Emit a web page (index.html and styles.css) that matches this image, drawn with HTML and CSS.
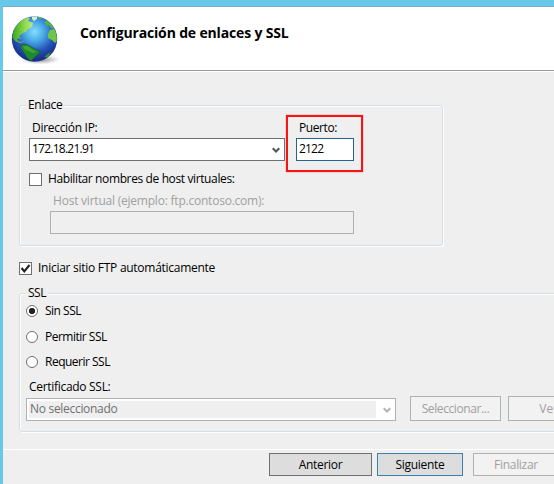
FILE: index.html
```html
<!DOCTYPE html>
<html lang="es">
<head>
<meta charset="utf-8">
<title>Configuración de enlaces y SSL</title>
<link rel="stylesheet" href="styles.css">
</head>
<body>
<div class="window">
  <header class="header">
    <svg class="globe" width="50" height="52" viewBox="0 0 50 52" aria-hidden="true">
      <defs>
        <radialGradient id="sea" cx="50%" cy="34%" r="62%">
          <stop offset="0" stop-color="#84e0f8"/>
          <stop offset=".35" stop-color="#48a8e6"/>
          <stop offset=".72" stop-color="#2450b6"/>
          <stop offset="1" stop-color="#192f8a"/>
        </radialGradient>
        <linearGradient id="land" x1="0" y1="0" x2="1" y2="0">
          <stop offset="0" stop-color="#35a51f"/>
          <stop offset=".6" stop-color="#8fd84a"/>
          <stop offset="1" stop-color="#c2e58a"/>
        </linearGradient>
        <radialGradient id="shade"><stop offset="0" stop-color="#555" stop-opacity=".75"/><stop offset="1" stop-color="#888" stop-opacity="0"/></radialGradient>
        <clipPath id="ball"><circle cx="23.5" cy="24" r="22.4"/></clipPath>
      </defs>
      <ellipse cx="29" cy="44.5" rx="20" ry="5" fill="url(#shade)"/>
      <circle cx="23.5" cy="24" r="22.7" fill="url(#sea)"/>
      <g clip-path="url(#ball)">
        <path fill="url(#land)" d="M1 22 3 13 9 6 16 2 19 3 17 6 22 8 21 12 17 14 15 17 12 18 8 21 10 24 7 23 6 25 9 27 14 26 9 28 4 26Z"/>
        <path fill="#d9eec4" d="M21 1 26 1 26 4 23 6 21 4Z"/>
        <path fill="#54b936" d="M27 2 31 2 30 4 28 4ZM34 6 38 6 42 11 43 14 40 13 38 10 36 11 34 8Z"/>
        <path fill="#70c548" d="M39 15 43 14 46 18 47 25 44 28 41 25 37 23 37 19Z"/>
        <path fill="#20892a" stroke="#123f66" stroke-width=".5" d="M10 30 14 29 19 31 22 33 29 36 28 39 25 41 22 44 20 46 16 43 13 38 10 34Z"/>
        <path fill="#58b936" d="M12 31 17 31 22 35 26 37 22 38 18 36 14 35Z" opacity=".6"/>
        <path fill="#2a9d30" d="M33 42 38 38 40 37 37 42Z"/>
      </g>
    </svg>
    <h1 class="title">Configuración de enlaces y SSL</h1>
  </header>

  <main class="content">
    <section class="group binding">
      <span class="legend l-enlace">Enlace</span>
      <div class="fields">
        <label class="field ip">
          <span class="text l-ip">Dirección IP:</span>
          <span class="box combo"><span class="v-ip">172.18.21.91</span>
            <svg class="chevron" width="8" height="7" viewBox="0 0 8 7"><path d="M.7 1.2 4 4.5 7.3 1.2"/></svg>
          </span>
        </label>
        <label class="field port">
          <span class="text l-port">Puerto:</span>
          <span class="box focused v-port">2122</span>
          <i class="marker"></i>
        </label>
      </div>
      <label class="check vhosts"><i class="tick"></i><span class="l-vhosts">Habilitar nombres de host virtuales:</span></label>
      <div class="vhost">
        <span class="text l-host">Host virtual (ejemplo: ftp.contoso.com):</span>
        <span class="box off"></span>
      </div>
    </section>

    <label class="check start"><i class="tick"><svg width="11" height="11" viewBox="0 0 11 11"><path d="M1.5 5 4.3 8.3 9.5 2" fill="none" stroke="#222" stroke-width="2.1"/></svg></i><span class="l-start">Iniciar sitio FTP automáticamente</span></label>

    <section class="group ssl">
      <span class="legend l-ssl">SSL</span>
      <div class="radios">
        <label class="radio"><i class="dot on"></i><span class="l-sin">Sin SSL</span></label>
        <label class="radio"><i class="dot"></i><span class="l-perm">Permitir SSL</span></label>
        <label class="radio"><i class="dot"></i><span class="l-req">Requerir SSL</span></label>
      </div>
      <span class="text l-cert">Certificado SSL:</span>
      <div class="cert">
        <span class="box combo off certbox"><span class="inner v-cert">No seleccionado</span>
          <svg class="chevron" width="8" height="7" viewBox="0 0 8 7"><path d="M.7 1.2 4 4.5 7.3 1.2"/></svg>
        </span>
        <button class="btn off sel" disabled><span class="b-sel">Seleccionar...</span></button>
        <button class="btn off ver" disabled><span>Ver...</span></button>
      </div>
    </section>
  </main>

  <footer class="footer">
    <button class="btn prev"><span class="b-prev">Anterior</span></button>
    <button class="btn next"><span class="b-next">Siguiente</span></button>
    <button class="btn off finish" disabled><span class="b-fin">Finalizar</span></button>
  </footer>
</div>
</body>
</html>
```

FILE: styles.css
```css
* { box-sizing: border-box; }
html, body { margin: 0; height: 484px; overflow: hidden; }
body { background: #66c9ea; color: #000; font: 12px/16px "Open Sans", "Noto Sans", sans-serif; }
i { font-style: normal; }
span { white-space: nowrap; }
.window { width: 100%; height: 484px; padding: 6px 0 0 3px; overflow: hidden; }
.header { display: flex; height: 66px; background: #fff; border-top: 1px solid #7caec9; border-bottom: 1px solid #fff; box-shadow: inset 0 -1px #999; padding: 8px 0 0 8px; }
.globe { flex: none; }
.title { margin: 8px 0 0 19px; font-size: 14px; line-height: 20px; font-weight: 700; letter-spacing: -.16px; white-space: nowrap; }

.content { height: 377px; background: #efefef; padding: 33px 0 0 16px; }
.group { border: 1px solid #d3dfe7; border-radius: 3px; box-shadow: 1px 1px #fff, inset 1px 1px #fff; }
.legend { display: block; width: max-content; background: #efefef; padding: 0 2px; margin: -9px 0 0 6px; height: 16px; }
.binding { width: 424px; height: 141px; }
.fields { display: flex; gap: 11px; margin: 7px 0 0 9px; }
.field { display: flex; flex-direction: column; position: relative; }
.text { display: block; height: 16px; }
.ip { width: 256px; }
.port { width: 58px; }
.ip .text, .port .text { height: 18px; padding-left: 3px; }
.box { display: block; height: 23px; border: 1px solid #707070; background: #fff; padding: 2px 0 0 2px; line-height: 16px; }
.combo { display: flex; justify-content: space-between; }
.chevron { flex: none; margin: 6px 4px 0 0; fill: none; stroke: #555; stroke-width: 2.2; }
.focused { border-color: #2a628f; }
.box.off { background: #efefef; border-color: #adb2b5; }
.marker { position: absolute; left: -10px; top: -5px; width: 77px; height: 57px; border: 2px solid #f81414; box-shadow: 0 0 1px #ff5050; }
.check { display: flex; align-items: center; height: 16px; gap: 6px; width: max-content; }
.tick { width: 13px; height: 13px; background: #fff; border: 1px solid #707070; display: block; }
.tick svg { display: block; }
.vhosts { margin: 10px 0 0 9px; }
.vhost { margin: 6px 0 0 30px; color: #a0a0a0; }
.vhost .text { padding-left: 3px; height: 18px; }
.vhost .box { width: 304px; }
.start { margin: 14px 0 17px; }

.ssl { width: 620px; height: 139px; }
.radios { display: grid; grid-template-rows: 26px 25px 25px; margin: 2px 0 0 6px; }
.radio { display: flex; height: 16px; align-items: center; gap: 7px; }
.dot { width: 12px; height: 12px; border: 1px solid #707070; border-radius: 50%; background: #fff; }
.dot.on { background: radial-gradient(circle, #222 2.8px, #fff 3.5px); }
.l-cert { margin-left: 9px; height: 17px; }
.cert { display: flex; align-items: flex-end; margin-left: 6px; }
.certbox { flex: none; width: 370px; margin-right: 14px; padding: 2px 0 0 2px; }
.cert .certbox { background: #fff; }
.inner { width: 347px; height: 17px; background: #efefef; color: #707070; padding-left: 1px; }
.certbox .chevron { stroke: #b5b5b5; }

.btn { font: inherit; color: #000; background: #ddd; border: 1px solid #707070; border-radius: 0; padding: 0; height: 23px; display: flex; align-items: center; justify-content: center; flex: none; }
.btn.off { color: #a0a0a0; background: #f2f2f2; border-color: #adb2b5; }
.cert .btn { width: 91px; height: 25px; }
.sel { margin-right: 7px; }
.footer { height: 35px; background: #efefef; border-top: 1px solid #fff; padding: 3px 0 0 266px; display: flex; }
.prev { width: 103px; margin-right: 5px; }
.btn.next { width: 86px; margin-right: 10px; border-color: #3c7fb1; }
.finish { width: 86px; }

.l-enlace, .l-ip, .l-cert, .v-cert, .b-prev, .b-next, .b-fin { letter-spacing: -.3px; }
.l-start { letter-spacing: -.27px; }
.l-host { letter-spacing: -.22px; }
.l-vhosts { letter-spacing: -.38px; }
.l-port, .b-sel { letter-spacing: -.4px; }
.l-ssl, .l-sin, .l-perm, .l-req { letter-spacing: -.5px; }
.v-ip { letter-spacing: -.75px; }
.v-port { letter-spacing: -.8px; }
```
